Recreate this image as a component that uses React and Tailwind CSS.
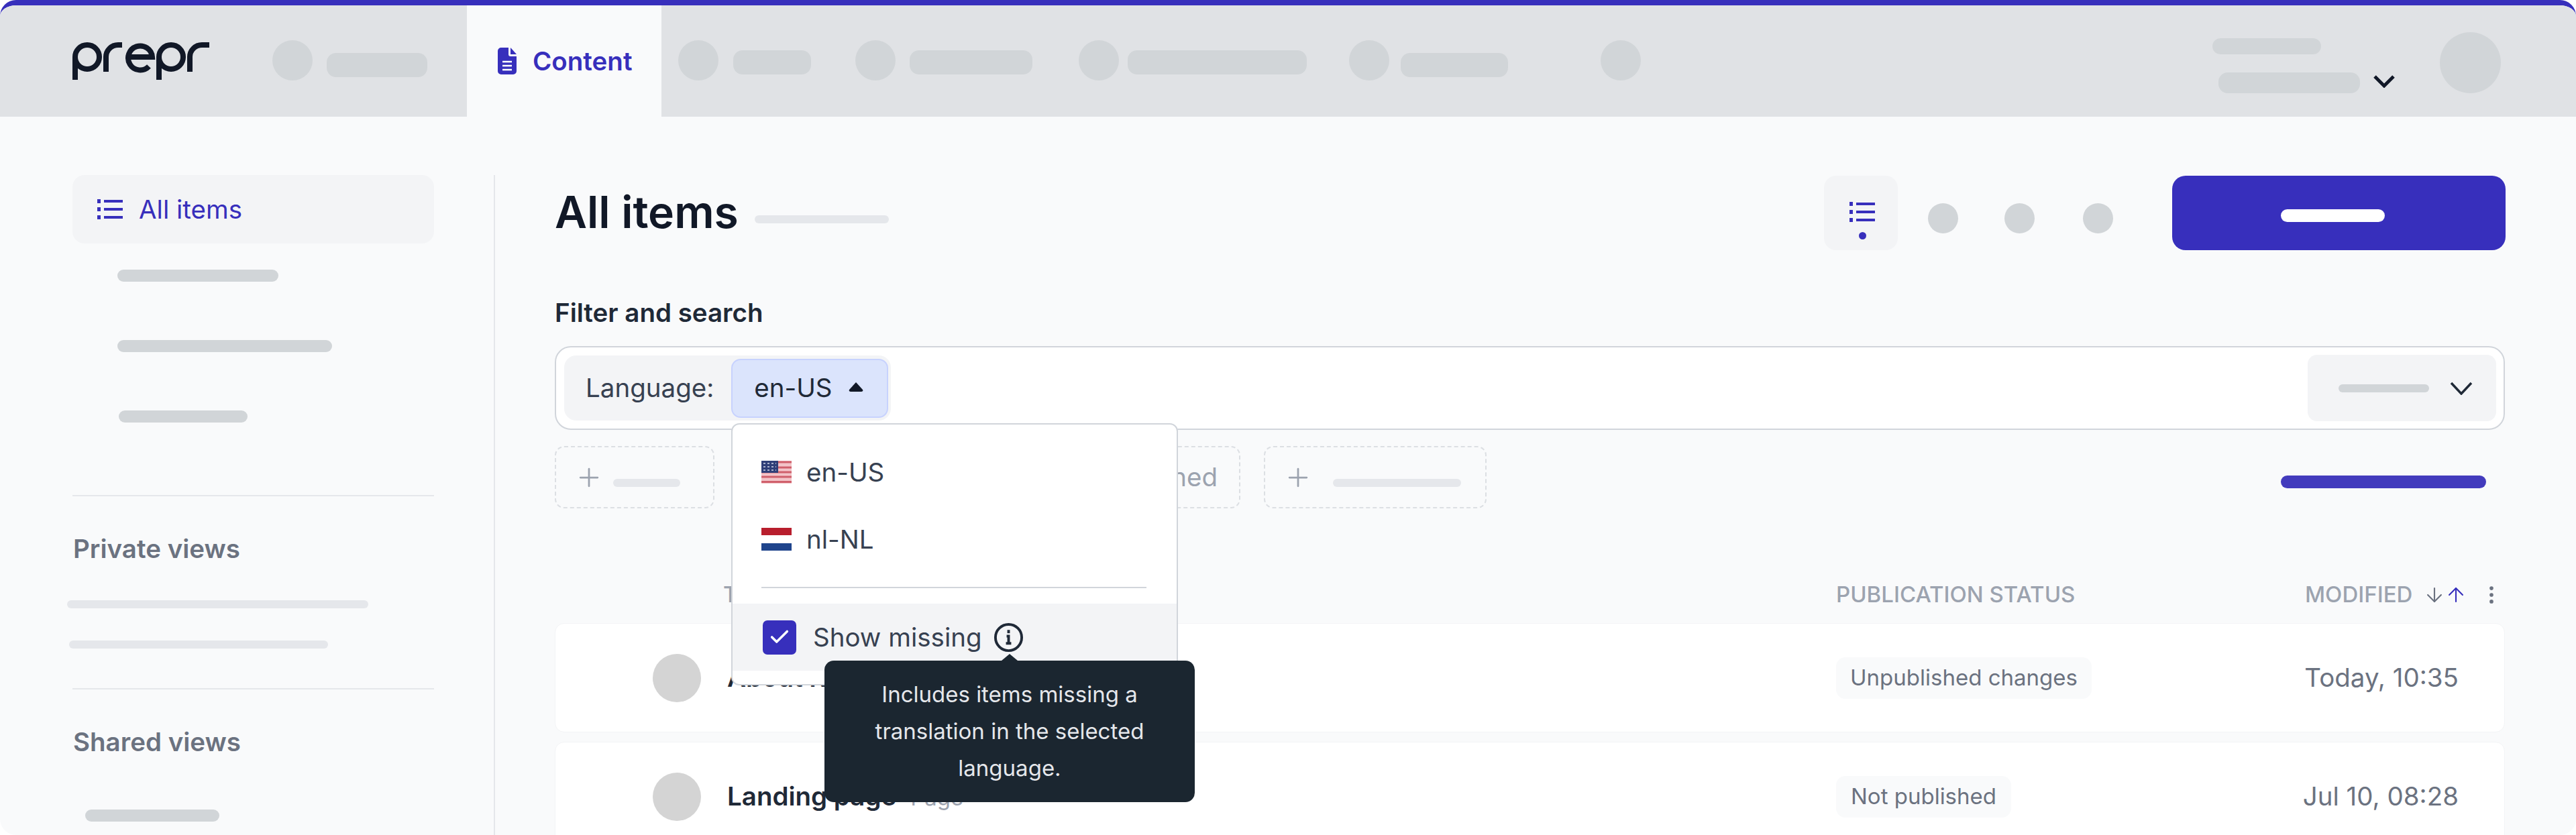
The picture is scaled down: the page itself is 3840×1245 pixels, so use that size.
import { Check, ArrowDown, ArrowUp, EllipsisVertical, Plus } from 'lucide-react';

const font = { fontFamily: 'Inter, sans-serif' };

const Logo = () => (
  <svg width="204" height="56" viewBox="0 0 204 56" fill="none" stroke="#111827" strokeWidth="8" className="shrink-0">
    <circle cx="22" cy="22" r="18" />
    <path d="M4 22V56" />
    <path d="M50 44V22A18 18 0 0 1 68 4H74" />
    <path d="M84 22H119A18 18 0 1 0 114 36" />
    <circle cx="147" cy="22" r="18" />
    <path d="M129 22V56" />
    <path d="M175 44V22A18 18 0 0 1 193 4H204" />
  </svg>
);

const ListIcon = () => (
  <svg width="38" height="32" viewBox="0 0 38 32" fill="none" stroke="#372fbc" strokeWidth="4" className="shrink-0">
    <path d="M10 4H38M10 16H38M10 28H38" />
    <path d="M0 4H5M0 16H5M0 28H5" strokeWidth="6" />
  </svg>
);

const DocIcon = () => (
  <svg width="28" height="40" viewBox="0 0 28 40" className="shrink-0">
    <path d="M5 0H16V10a3 3 0 0 0 3 3H28V35a5 5 0 0 1-5 5H5a5 5 0 0 1-5-5V5a5 5 0 0 1 5-5Z" fill="#372fbc" />
    <path d="M19 0L28 10H19Z" fill="#372fbc" />
    <path d="M7 21H21M7 27H21M7 33H21" stroke="#fff" strokeWidth="2.5" />
  </svg>
);

const InfoIcon = () => (
  <svg width="47" height="47" viewBox="0 0 24 24" fill="none" stroke="#1f2937" strokeWidth="2" className="ml-[16px] shrink-0">
    <circle cx="12" cy="12" r="10" />
    <path d="M10.500 11H12V16.500M10 16.500H14" />
    <path d="M11 7.500H13" strokeWidth="2.500" />
  </svg>
);

const UsFlag = () => (
  <svg width="45" height="34" viewBox="0 0 45 34" className="shrink-0">
    <rect width="45" height="34" fill="#f3c4c8" />
    <path d="M0 2H45M0 10H45M0 17H45M0 24H45M0 31.500H45" stroke="#d0606c" strokeWidth="3" />
    <rect width="25" height="18" fill="#2f3f78" />
    <path d="M3 4H22M3 9H22M3 14H22" stroke="#aab1cc" strokeWidth="2" strokeDasharray="3 3" />
  </svg>
);

const NlFlag = () => (
  <div className="w-[45px] h-[34px] flex flex-col shrink-0">
    <div className="h-[11px] bg-[#b81e2d]" />
    <div className="h-[12px] bg-white" />
    <div className="h-[11px] bg-[#1f448c]" />
  </div>
);

const Dot = ({ className = '' }) => <div className={`w-[60px] h-[60px] rounded-full bg-[#d1d5d8] shrink-0 ${className}`} />;
const Pill = ({ className = '' }) => <div className={`rounded-[14px] bg-[#d1d5d8] shrink-0 ${className}`} />;

const TopNav = () => (
  <div className="h-[166px] bg-[#e0e2e5] flex items-start shrink-0">
    <div className="ml-[108px] mt-[55px]"><Logo /></div>
    <Dot className="ml-[94px] mt-[52px]" />
    <Pill className="ml-[21px] mt-[71px] w-[150px] h-[36px]" />
    <div className="ml-[59px] w-[290px] h-full bg-[#f9fafb] flex items-center gap-[24px] pl-[46px]">
      <DocIcon />
      <span className="text-[38.5px] font-semibold text-[#372fbc] leading-none">Content</span>
    </div>
    <Dot className="ml-[25px] mt-[52px]" />
    <Pill className="ml-[22px] mt-[67px] w-[116px] h-[36px]" />
    <Dot className="ml-[66px] mt-[52px]" />
    <Pill className="ml-[21px] mt-[67px] w-[183px] h-[36px]" />
    <Dot className="ml-[69px] mt-[52px]" />
    <Pill className="ml-[13px] mt-[67px] w-[267px] h-[36px]" />
    <Dot className="ml-[63px] mt-[52px]" />
    <Pill className="ml-[17px] mt-[71px] w-[160px] h-[36px]" />
    <Dot className="ml-[138px] mt-[52px]" />
    <div className="ml-[852px] flex flex-col mt-[49px]">
      <Pill className="w-[162px] h-[24px]" />
      <div className="flex items-center mt-[27px] ml-[9px]">
        <Pill className="w-[211px] h-[31px]" />
        <svg width="32" height="19" viewBox="0 0 32 19" fill="none" stroke="#111827" strokeWidth="5" className="ml-[20px] -mt-[4px]">
          <path d="M2 2L16 16L30 2" />
        </svg>
      </div>
    </div>
    <div className="ml-[67px] mt-[40px] w-[91px] h-[91px] rounded-full bg-[#d1d5d8] shrink-0" />
  </div>
);

const Sidebar = () => (
  <aside className="w-[736px] pl-[108px] pr-[89px] pt-[87px] shrink-0">
    <div className="h-[102px] w-[539px] rounded-[18px] bg-[#f3f4f6] flex items-center pl-[37px] gap-[24px]">
      <ListIcon />
      <span className="text-[38.5px] text-[#372fbc] leading-none">All items</span>
    </div>
    <Pill className="mt-[39px] ml-[67px] w-[240px] h-[18px] rounded-full" />
    <Pill className="mt-[87px] ml-[67px] w-[320px] h-[18px] rounded-full" />
    <Pill className="mt-[87px] ml-[69px] w-[192px] h-[18px] rounded-full" />
    <div className="mt-[108px] w-[539px] h-[2px] bg-[#e5e7eb]" />
    <div className="mt-[60px] text-[38.5px] font-semibold text-[#6b7280] leading-[36px] ml-[1px]">Private views</div>
    <div className="mt-[59px] -ml-[8px] w-[449px] h-[12px] rounded-full bg-[#e5e7eb]" />
    <div className="mt-[48px] -ml-[5px] w-[386px] h-[12px] rounded-full bg-[#e5e7eb]" />
    <div className="mt-[59px] w-[539px] h-[2px] bg-[#e5e7eb]" />
    <div className="mt-[60px] text-[38.5px] font-semibold text-[#6b7280] leading-[36px] ml-[1px]">Shared views</div>
    <Pill className="mt-[83px] ml-[19px] w-[200px] h-[18px] rounded-full" />
  </aside>
);

const Toolbar = () => (
  <div className="flex items-start -mr-[1px]">
    <h1 className="text-[66px] font-semibold text-[#111827] leading-none mt-[21px]">All items</h1>
    <div className="ml-[24px] mt-[59px] w-[200px] h-[12px] rounded-full bg-[#e5e7eb]" />
    <div className="ml-auto w-[110px] h-[111px] rounded-[18px] bg-[#f3f4f6] flex flex-col items-center pt-[38px] pl-[4px]">
      <ListIcon />
      <div className="w-[11px] h-[11px] rounded-full bg-[#372fbc] mt-[14px]" />
    </div>
    <div className="ml-[45px] mt-[41px] w-[45px] h-[45px] rounded-full bg-[#d1d5d8]" />
    <div className="ml-[69px] mt-[41px] w-[45px] h-[45px] rounded-full bg-[#d1d5d8]" />
    <div className="ml-[72px] mt-[41px] w-[45px] h-[45px] rounded-full bg-[#d1d5d8]" />
    <div className="ml-[88px] w-[497px] h-[111px] rounded-[20px] bg-[#372fbc] flex items-center justify-center pt-[8px] pr-[19px]">
      <div className="w-[155px] h-[19px] rounded-full bg-white" />
    </div>
  </div>
);

const FilterBox = () => (
  <div className="mt-[35px] h-[125px] rounded-[24px] border-2 border-[#d1d5db] bg-white flex items-center pl-[12px] pr-[11px]">
    <div className="h-[97px] rounded-[18px] bg-[#f3f4f6] flex items-center pl-[32px] pr-[4px]">
      <span className="text-[38.5px] text-[#374151] leading-none">Language:</span>
      <div className="ml-[26px] w-[234px] h-[88px] rounded-[14px] border-2 border-[#c7d2fe] bg-[#dbe4fc] flex items-center pl-[32px]">
        <span className="text-[38.5px] text-[#1f2937] leading-none">en-US</span>
        <svg width="24" height="16" viewBox="0 0 24 16" className="ml-[23px] -mt-[4px] shrink-0">
          <path d="M12 1L22 12Q23 15 20 15H4Q1 15 2 12Z" fill="#111827" />
        </svg>
      </div>
    </div>
    <div className="ml-auto w-[281px] h-[99px] rounded-[14px] bg-[#f3f4f6] flex items-center pl-[46px]">
      <div className="w-[135px] h-[12px] rounded-full bg-[#d1d5d8]" />
      <svg width="34" height="20" viewBox="0 0 34 20" fill="none" stroke="#1f2937" strokeWidth="3.500" className="ml-[31px]">
        <path d="M2 2L17 18L32 2" />
      </svg>
    </div>
  </div>
);

const AddFilter = ({ w, children, className = '' }) => (
  <div className={`h-[93px] rounded-[14px] border-2 border-dashed border-[#dcdfe3] flex items-center shrink-0 ${w} ${className}`}>
    {children}
  </div>
);

const FilterChips = () => (
  <div className="mt-[24px] h-[93px] flex items-start">
    <AddFilter w="w-[238px]" className="pl-[27px]">
      <Plus size={44} strokeWidth={1.5} color="#9ca3af" />
      <div className="ml-[14px] mt-[17px] w-[100px] h-[12px] rounded-full bg-[#e5e7eb]" />
    </AddFilter>
    <AddFilter w="w-[756px]" className="ml-[28px] justify-end pr-[32px]">
      <span className="text-[38.5px] text-[#9ca3af] leading-none">Assigned</span>
    </AddFilter>
    <AddFilter w="w-[332px]" className="ml-[35px] pl-[27px]">
      <Plus size={44} strokeWidth={1.5} color="#9ca3af" />
      <div className="ml-[30px] mt-[17px] w-[191px] h-[12px] rounded-full bg-[#e5e7eb]" />
    </AddFilter>
    <div className="ml-auto mr-[28px] mt-[44px] w-[306px] h-[19px] rounded-full bg-[#433bbd]" />
  </div>
);

const TableHeader = () => (
  <div className="mt-[112px] h-[33px] flex items-center text-[33px] font-medium uppercase text-[#9ca3af] leading-none">
    <span className="ml-[251px] w-[1659px] shrink-0">Title</span>
    <span className="w-[699px] shrink-0">Publication status</span>
    <span>Modified</span>
    <ArrowDown size={34} strokeWidth={1.5} color="#6b7280" className="ml-[16px] shrink-0" />
    <ArrowUp size={34} strokeWidth={1.5} color="#372fbc" className="-ml-[2px] shrink-0" />
    <EllipsisVertical size={34} strokeWidth={2} color="#6b7280" className="ml-[19px] shrink-0" />
  </div>
);

const Row = ({ title, type, status, badgeW, time, className = '' }) => (
  <div className={`h-[163px] rounded-[14px] bg-white border border-[#f3f4f6] flex items-center shrink-0 ${className}`}>
    <div className="ml-[145px] w-[72px] h-[72px] rounded-full bg-[#d4d4d4] shrink-0" />
    <div className="ml-[39px] w-[1653px] shrink-0 flex items-baseline gap-[21px]">
      <span className="text-[38.5px] font-semibold text-[#1f2937] leading-none">{title}</span>
      {type && <span className="text-[33px] text-[#9ca3af] leading-none">{type}</span>}
    </div>
    <div className={`h-[62px] rounded-[14px] bg-[#f9fafb] flex items-center justify-center text-[33px] text-[#6b7280] shrink-0 ${badgeW}`}>{status}</div>
    <div className="text-[38.5px] text-[#6b7280] leading-none ml-auto mr-[68px]">{time}</div>
  </div>
);

const LanguageMenu = () => (
  <div className="absolute left-[1090px] top-[631px] w-[666px] h-[391px] rounded-[12px] border-2 border-[#d1d5db] bg-white overflow-hidden z-10">
    <div className="flex items-center gap-[22px] pl-[43px] h-[34px] mt-[54px]">
      <UsFlag />
      <span className="text-[38.5px] text-[#374151] leading-none">en-US</span>
    </div>
    <div className="flex items-center gap-[22px] pl-[43px] h-[34px] mt-[66px]">
      <NlFlag />
      <span className="text-[38.5px] text-[#374151] leading-none">nl-NL</span>
    </div>
    <div className="ml-[43px] mr-[45px] h-[2px] bg-[#d1d5db] mt-[54px]" />
    <div className="mt-[23px] h-[100px] bg-[#f3f4f6] flex items-center pl-[45px]">
      <div className="w-[50px] h-[51px] rounded-[7px] bg-[#372fbc] flex items-center justify-center shrink-0">
        <Check size={34} strokeWidth={2.5} color="#fff" />
      </div>
      <span className="ml-[25px] text-[38.5px] text-[#374151] leading-none">Show missing</span>
      <InfoIcon />
    </div>
  </div>
);

const MissingTooltip = () => (
  <div className="absolute left-[1229px] top-[985px] w-[552px] h-[211px] rounded-[14px] bg-[#1b2630] z-20 flex items-center justify-center text-center text-[33px] leading-[55px] text-[#e5e7eb] px-[50px]">
    <div className="absolute left-[264px] -top-[10px] w-0 h-0 border-l-[12px] border-r-[12px] border-b-[10px] border-l-transparent border-r-transparent border-b-[#1b2630]" />
    Includes items missing a translation in the selected language.
  </div>
);

export default function App() {
  return (
    <div className="relative h-[1245px] w-full overflow-hidden bg-white" style={font}>
      <div className="h-full rounded-[24px] overflow-hidden bg-[#f9fafb] border-t-8 border-[#372fbc] flex flex-col">
        <TopNav />
        <div className="flex flex-1 min-h-0">
          <Sidebar />
          <main className="flex-1 mt-[87px] border-l-2 border-[#e5e7eb] pl-[89px] pr-[106px] pt-[1px] min-w-0">
            <Toolbar />
            <div className="mt-[78px] text-[38.5px] font-semibold text-[#1f2937] leading-[30px]">Filter and search</div>
            <FilterBox />
            <FilterChips />
            <TableHeader />
            <Row className="mt-[26px]" title="About Rocks" status="Unpublished changes" badgeW="w-[381px]" time="Today, 10:35" />
            <Row className="mt-[14px]" title="Landing page" type="Page" status="Not published" badgeW="w-[261px]" time="Jul 10, 08:28" />
          </main>
        </div>
      </div>
      <LanguageMenu />
      <MissingTooltip />
    </div>
  );
}
